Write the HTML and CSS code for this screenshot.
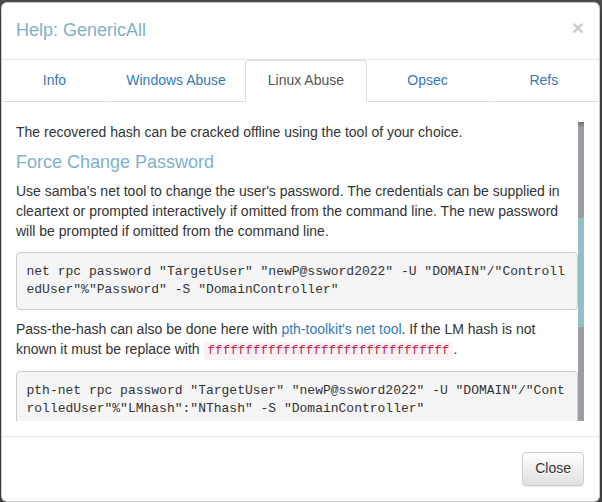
FILE: index.html
```html
<!DOCTYPE html>
<html lang="en">
<head>
<meta charset="utf-8">
<title>Help: GenericAll</title>
<link rel="stylesheet" href="styles.css">
</head>
<body>
<div class="modal">
  <div class="modal-header">
    <h4 class="modal-title">Help: GenericAll</h4>
    <button class="close" type="button">&times;</button>
  </div>
  <ul class="tabs">
    <li><a href="#">Info</a></li>
    <li><a href="#">Windows Abuse</a></li>
    <li class="active"><a href="#">Linux Abuse</a></li>
    <li><a href="#">Opsec</a></li>
    <li><a href="#">Refs</a></li>
  </ul>
  <div class="modal-body">
    <div class="scroll" id="scroll">
      <p>Full control of a user allows you to modify properties of the user to perform a targeted kerberoast attack, and also grants the ability to reset the password of the user without knowing their current one.</p>
      <h4 class="section">Targeted Kerberoast</h4>
      <p>A targeted kerberoast attack can be performed using <a href="#">targetedKerberoast.py</a>.</p>
      <pre>targetedKerberoast.py -v -d 'domain.local' -u 'controlledUser' -p 'ItsPassword'</pre>
      <p>The tool will automatically attempt a targetedKerberoast attack, either on all users or against a specific one if specified in the command line, and then obtain a crackable hash.</p>
      <p id="start">The recovered hash can be cracked offline using the tool of your choice.</p>
      <h4 class="section">Force Change Password</h4>
      <p>Use samba's net tool to change the user's password. The credentials can be supplied in cleartext or prompted interactively if omitted from the command line. The new password will be prompted if omitted from the command line.</p>
      <pre>net rpc password "TargetUser" "newP@ssword2022" -U "DOMAIN"/"ControlledUser"%"Password" -S "DomainController"</pre>
      <p>Pass-the-hash can also be done here with <a href="#">pth-toolkit's net tool</a>. If the LM hash is not known it must be replace with <code>ffffffffffffffffffffffffffffffff</code>.</p>
      <pre>pth-net rpc password "TargetUser" "newP@ssword2022" -U "DOMAIN"/"ControlledUser"%"LMhash":"NThash" -S "DomainController"</pre>
      <p>Now that you know the target user's plain text password, you can either start a new agent as that user, or use that user's credentials in conjunction with PowerView's ACL abuse functions, or perhaps even RDP to a system the target user has access to.</p>
      <h4 class="section">Shadow Credentials attack</h4>
      <p>To abuse this privilege, use <a href="#">pyWhisker</a>.</p>
      <pre>pywhisker.py -d "domain.local" -u "controlledAccount" -p "somepassword" --target "targetAccount" --action "add"</pre>
      <p>For other optional parameters, view the pyWhisker documentation.</p>
    </div>
    <div class="sb-track"><div class="sb-thumb"></div></div>
  </div>
  <div class="modal-footer">
    <button class="btn" type="button">Close</button>
  </div>
</div>
<script src="script.js"></script>
</body>
</html>
```
FILE: styles.css
```css
html, body {
  margin: 0;
  padding: 0;
  background: #505050;
  height: 100%;
  overflow: hidden;
}
body {
  font-family: "Liberation Sans", Arial, sans-serif;
  font-size: 14px;
  line-height: 1.42857;
  color: #333;
}
.modal {
  width: 597px;
  margin: 2px 0 0 1px;
  background: #fff;
  border: 1px solid rgba(0, 0, 0, 0.2);
  border-radius: 6px;
  box-shadow: 0 5px 15px rgba(0, 0, 0, 0.5);
  overflow: hidden;
}
.modal-header {
  display: flex;
  align-items: flex-start;
  justify-content: space-between;
  padding: 15px 15px 15px 14px;
  border-bottom: 1px solid #e5e5e5;
}
.modal-title {
  margin: 0;
  font-size: 18px;
  font-weight: 400;
  line-height: 1.42857;
  color: #80b1c8;
}
.close {
  margin-top: -1px;
  padding: 0;
  border: 0;
  background: transparent;
  font-family: "Liberation Sans", Arial, sans-serif;
  font-size: 21px;
  font-weight: 700;
  line-height: 1;
  color: #000;
  opacity: 0.2;
  cursor: pointer;
}
.tabs {
  display: table;
  width: 100%;
  margin: 0;
  padding: 0;
  list-style: none;
}
.tabs li {
  display: table-cell;
  width: 1%;
}
.tabs a {
  display: block;
  padding: 10px 15px;
  text-align: center;
  text-decoration: none;
  color: #337ab7;
  border: 1px solid transparent;
  border-bottom-color: #ddd;
  border-radius: 4px 4px 0 0;
}
.tabs .active a {
  color: #555;
  border-color: #ddd;
  border-bottom-color: #fff;
}
.modal-body {
  position: relative;
  padding: 20px 15px 15px 14px;
}
.scroll {
  position: relative;
  height: 299px;
  padding-right: 6px;
  overflow-y: auto;
  scrollbar-width: none;
}
.scroll::-webkit-scrollbar {
  display: none;
}
.sb-track {
  position: absolute;
  top: 20px;
  right: 15px;
  width: 6px;
  height: 299px;
  background: linear-gradient(to bottom, #6e7278 0, #9a9ea4 6px, #9a9ea4 100%);
}
.sb-thumb {
  position: absolute;
  top: 96px;
  left: 0;
  width: 6px;
  height: 109px;
  background: #8fc2c6;
}
p {
  margin: 0 0 10px;
}
a {
  color: #337ab7;
  text-decoration: none;
}
.section {
  margin: 10px 0 10px;
  font-size: 18px;
  font-weight: 400;
  line-height: 1.1;
  color: #80b1c8;
}
pre {
  margin: 0 0 10px;
  padding: 9.5px;
  font-family: "Liberation Mono", "Courier New", monospace;
  font-size: 13px;
  line-height: 1.42857;
  color: #333;
  background: #f5f5f5;
  border: 1px solid #ccc;
  border-radius: 4px;
  white-space: pre-wrap;
  word-break: break-all;
  word-wrap: break-word;
}
code {
  padding: 2px 4px;
  font-family: "Liberation Mono", "Courier New", monospace;
  font-size: 90%;
  color: #c7254e;
  background: #f9f2f4;
  border-radius: 4px;
}
.modal-footer {
  display: flex;
  justify-content: flex-end;
  padding: 15px;
  border-top: 1px solid #e5e5e5;
}
.btn {
  padding: 6px 12px;
  font-family: "Liberation Sans", Arial, sans-serif;
  font-size: 14px;
  line-height: 1.42857;
  color: #333;
  background: linear-gradient(to bottom, #fff 0, #e0e0e0 100%);
  border: 1px solid #ccc;
  border-radius: 4px;
  box-shadow: inset 0 1px 0 rgba(255, 255, 255, 0.15), 0 1px 1px rgba(0, 0, 0, 0.075);
  text-shadow: 0 1px 0 #fff;
  cursor: pointer;
}
```
FILE: script.js
```js
var box = document.getElementById('scroll');
var start = document.getElementById('start');
box.scrollTop = start.offsetTop - 1;
```
